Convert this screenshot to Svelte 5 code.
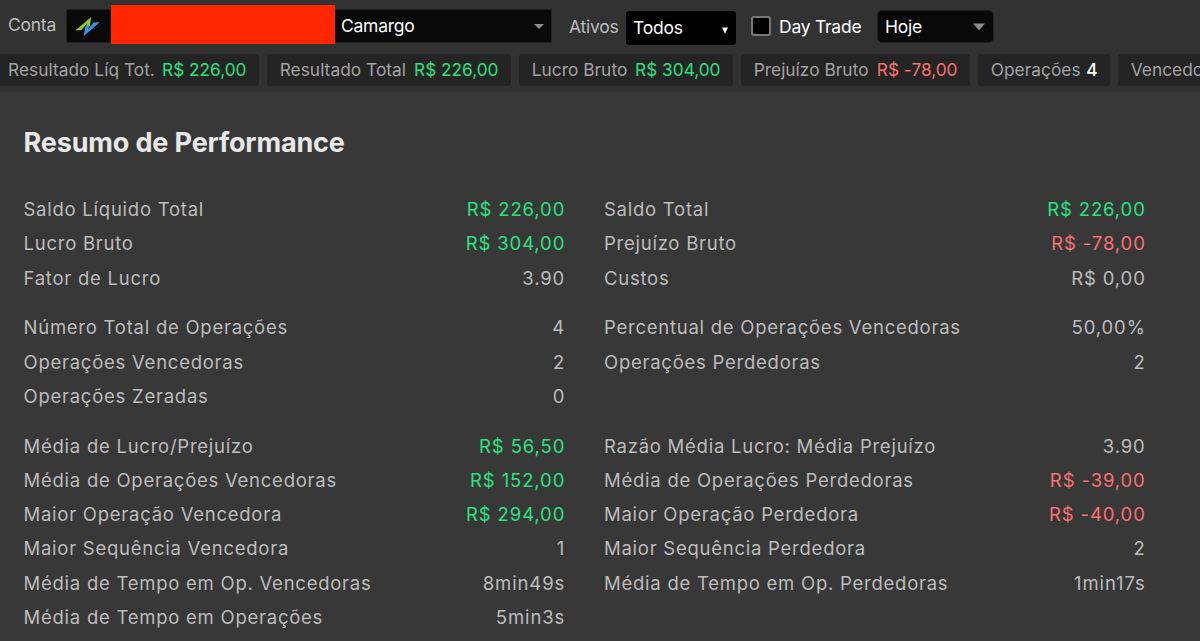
<script>
  const chips = [
    { label: 'Resultado Líq Tot.', value: 'R$ 226,00', tone: 'pos', width: 259 },
    { label: 'Resultado Total', value: 'R$ 226,00', tone: 'pos', width: 244 },
    { label: 'Lucro Bruto', value: 'R$ 304,00', tone: 'pos', width: 214 },
    { label: 'Prejuízo Bruto', value: 'R$ -78,00', tone: 'neg', width: 229 },
    { label: 'Operações', value: '4', tone: 'strong', width: 132 },
    { label: 'Vencedoras', value: '', tone: 'strong', width: 150 }
  ];

  const groups = [
    [
      [['Saldo Líquido Total', 'R$ 226,00', 'pos'], ['Saldo Total', 'R$ 226,00', 'pos']],
      [['Lucro Bruto', 'R$ 304,00', 'pos'], ['Prejuízo Bruto', 'R$ -78,00', 'neg']],
      [['Fator de Lucro', '3.90', ''], ['Custos', 'R$ 0,00', '']]
    ],
    [
      [['Número Total de Operações', '4', ''], ['Percentual de Operações Vencedoras', '50,00%', '']],
      [['Operações Vencedoras', '2', ''], ['Operações Perdedoras', '2', '']],
      [['Operações Zeradas', '0', '']]
    ],
    [
      [['Média de Lucro/Prejuízo', 'R$ 56,50', 'pos'], ['Razão Média Lucro: Média Prejuízo', '3.90', '']],
      [['Média de Operações Vencedoras', 'R$ 152,00', 'pos'], ['Média de Operações Perdedoras', 'R$ -39,00', 'neg']],
      [['Maior Operação Vencedora', 'R$ 294,00', 'pos'], ['Maior Operação Perdedora', 'R$ -40,00', 'neg']],
      [['Maior Sequência Vencedora', '1', ''], ['Maior Sequência Perdedora', '2', '']],
      [['Média de Tempo em Op. Vencedoras', '8min49s', ''], ['Média de Tempo em Op. Perdedoras', '1min17s', '']],
      [['Média de Tempo em Operações', '5min3s', '']]
    ]
  ];
</script>

<div class="app">
  <header class="toolbar">
    <span class="label conta">Conta</span>
    <div class="select account">
      <svg class="logo" width="26" height="21" viewBox="0 0 26 21">
        <path d="M.3 14.4 16.2 1l-1.4 9-3.9 1.8 1-4.4L6.6 14z" fill="#86cf2c" />
        <path d="M24.7 6.2 8.8 20l1.6-9.4 3.8-1.6-1 4.5 5.4-6.9z" fill="#2c98ea" />
      </svg>
      <span class="name">Camargo</span>
      <svg class="caret" width="10" height="5" viewBox="0 0 10 5"><path d="M0 0h10L5 5z" fill="#8c8c8c" /></svg>
      <span class="redaction"></span>
    </div>
    <span class="label ativos">Ativos</span>
    <div class="select assets">
      <span>Todos</span>
      <svg class="caret" width="6" height="7" viewBox="0 0 6 7"><path d="M0 .5h6L3 6.8z" fill="#fff" /></svg>
    </div>
    <span class="check"></span>
    <span class="day">Day Trade</span>
    <div class="select period">
      <span>Hoje</span>
      <svg class="caret" width="12" height="8" viewBox="0 0 12 8"><path d="M0 .5h12L6 7.5z" fill="#8c8c8c" /></svg>
    </div>
  </header>

  <div class="chips">
    {#each chips as c}
      <div class="chip" style="width: {c.width}px">
        <span>{c.label}</span>{#if c.value}<span class="value {c.tone}">{c.value}</span>{/if}
      </div>
    {/each}
  </div>

  <main>
    <h1>Resumo de Performance</h1>
    {#each groups as group}
      <section>
        {#each group as row}
          <div class="row">
            {#each row as [label, value, tone]}
              <div class="cell"><span>{label}</span><span class="value {tone}">{value}</span></div>
            {/each}
          </div>
        {/each}
      </section>
    {/each}
  </main>
</div>

<style>
  :global(body) { margin: 0; background: #383838; overflow: hidden; }
  .app {
    width: 1200px; height: 641px; overflow: hidden; box-sizing: border-box;
    background: #383838; color: #bcbcbc; font-family: Inter, sans-serif; font-weight: 440; white-space: nowrap;
  }
  .app * { box-sizing: border-box; }
  .toolbar {
    display: flex; align-items: flex-start; height: 54px; padding-left: 8px;
    background: #323232; font-size: 17.5px; line-height: 34px; letter-spacing: -.25px;
  }
  .label { color: #bdbdbd; }
  .conta { width: 58px; padding-top: 8px; }
  .select { display: flex; align-items: center; color: #fff; background: #090909; border: 1px solid #222; }
  .account { position: relative; width: 486px; height: 34px; margin-top: 9px; padding: 0 7px 0 8px; border-radius: 2px; }
  .name { margin-left: 240px; }
  .caret { margin-left: auto; }
  .redaction { position: absolute; left: 43.5px; top: -5px; width: 224.5px; height: 39px; background: #ff2600; }
  .ativos { width: 57px; margin-left: 17px; padding-top: 10px; }
  .assets { width: 110px; height: 34px; margin-top: 11px; padding: 0 8px 0 7px; border-radius: 3px; border: 0; background: #000; letter-spacing: -.25px; }
  .assets .caret { margin-top: 4px; }
  .check { width: 20px; height: 20px; margin: 16px 8px 0 15px; border: 2px solid #777; border-radius: 3px; background: #000; }
  .day { width: 98px; padding-top: 10px; color: #fff; }
  .period { width: 117px; height: 33px; margin-top: 10px; padding: 0 8px 0 7px; border-radius: 5px; }
  .chips { display: flex; gap: 8px; height: 38px; padding-bottom: 6px; background: #323232; }
  .chip {
    flex: none; display: flex; align-items: center; justify-content: space-between; height: 32px; padding: 0 12.5px 1px 12.7px;
    border-radius: 3px; background: #242424; color: #a3a3a3; font-size: 17.3px; letter-spacing: .04px;
  }
  .chip:first-child { padding-left: 8px; border-radius: 0 3px 3px 0; }
  .chip .value { letter-spacing: -.02px; }
  .pos { color: #2ce080; }
  .neg { color: #fa7070; }
  .chip .strong { color: #fff; font-weight: 500; }
  main { padding: 32px 55px 0 23.5px; }
  h1 { margin: 0 0 32px; font-size: 27px; line-height: 37px; height: 36px; font-weight: 700; letter-spacing: -.15px; color: #e8e8e8; }
  section { margin-bottom: 15.4px; }
  .row { display: grid; grid-template-columns: 541px 541px; column-gap: 39.5px; height: 34.3px; }
  .cell { display: flex; justify-content: space-between; line-height: 34px; font-size: 18.5px; letter-spacing: .75px; }
  .cell .value { margin-right: -.7px; letter-spacing: .88px; }
</style>
